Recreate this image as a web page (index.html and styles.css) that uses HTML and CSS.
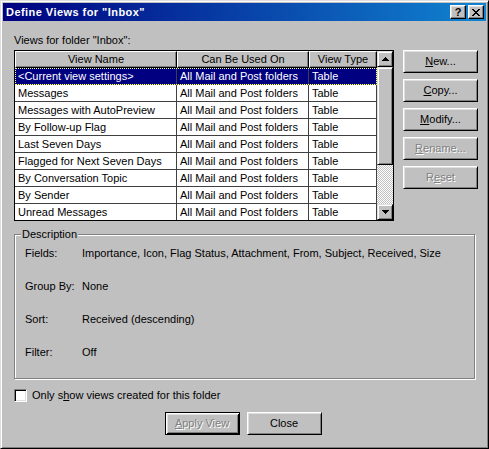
FILE: index.html
```html
<!DOCTYPE html>
<html>
<head>
<meta charset="utf-8">
<link rel="stylesheet" href="styles.css">
</head>
<body>
<div class="window">
  <div class="titlebar">
    <span class="title">Define Views for "Inbox"</span>
    <div class="tbtns">
      <span class="tbtn help">?</span>
      <span class="tbtn"><svg width="8" height="7" viewBox="0 0 8 7" shape-rendering="crispEdges"><path fill="#000" d="M0 0h2v1H0zM6 0h2v1H6zM1 1h2v1H1zM5 1h2v1H5zM2 2h4v1H2zM3 3h2v1H3zM2 4h4v1H2zM1 5h2v1H1zM5 5h2v1H5zM0 6h2v1H0zM6 6h2v1H6z"/></svg></span>
    </div>
  </div>
  <div class="content">
    <div class="top">
      <div class="left">
        <div class="lbl">Views for folder "Inbox":</div>
        <div class="list">
          <div class="list-main">
            <div class="hdr">
              <div class="hc c1">View Name</div>
              <div class="hc c2">Can Be Used On</div>
              <div class="hc c3">View Type</div>
            </div>
            <div class="row sel"><div class="cell c1">&lt;Current view settings&gt;</div><div class="cell c2">All Mail and Post folders</div><div class="cell c3">Table</div></div>
            <div class="row"><div class="cell c1">Messages</div><div class="cell c2">All Mail and Post folders</div><div class="cell c3">Table</div></div>
            <div class="row"><div class="cell c1">Messages with AutoPreview</div><div class="cell c2">All Mail and Post folders</div><div class="cell c3">Table</div></div>
            <div class="row"><div class="cell c1">By Follow-up Flag</div><div class="cell c2">All Mail and Post folders</div><div class="cell c3">Table</div></div>
            <div class="row"><div class="cell c1">Last Seven Days</div><div class="cell c2">All Mail and Post folders</div><div class="cell c3">Table</div></div>
            <div class="row"><div class="cell c1">Flagged for Next Seven Days</div><div class="cell c2">All Mail and Post folders</div><div class="cell c3">Table</div></div>
            <div class="row"><div class="cell c1">By Conversation Topic</div><div class="cell c2">All Mail and Post folders</div><div class="cell c3">Table</div></div>
            <div class="row"><div class="cell c1">By Sender</div><div class="cell c2">All Mail and Post folders</div><div class="cell c3">Table</div></div>
            <div class="row"><div class="cell c1">Unread Messages</div><div class="cell c2">All Mail and Post folders</div><div class="cell c3">Table</div></div>
          </div>
          <div class="vscroll">
            <div class="sb-btn"><svg width="7" height="4" viewBox="0 0 7 4" shape-rendering="crispEdges"><path fill="#000" d="M3 0h1v1H3zM2 1h3v1H2zM1 2h5v1H1zM0 3h7v1H0z"/></svg></div>
            <div class="sb-btn thumb"></div>
            <div class="track"></div>
            <div class="sb-btn"><svg width="7" height="4" viewBox="0 0 7 4" shape-rendering="crispEdges"><path fill="#000" d="M0 0h7v1H0zM1 1h5v1H1zM2 2h3v1H2zM3 3h1v1H3z"/></svg></div>
          </div>
        </div>
      </div>
      <div class="side">
        <div class="btn"><u>N</u>ew...</div>
        <div class="btn"><u>C</u>opy...</div>
        <div class="btn"><u>M</u>odify...</div>
        <div class="btn disabled"><u>R</u>ename...</div>
        <div class="btn disabled">R<u>e</u>set</div>
      </div>
    </div>
    <fieldset class="desc">
      <legend>Description</legend>
      <div class="desc-grid">
        <div>Fields:</div><div>Importance, Icon, Flag Status, Attachment, From, Subject, Received, Size</div>
        <div>Group By:</div><div>None</div>
        <div>Sort:</div><div>Received (descending)</div>
        <div>Filter:</div><div>Off</div>
      </div>
    </fieldset>
    <div class="chk"><span class="box"></span><span>Only s<u>h</u>ow views created for this folder</span></div>
    <div class="bottom">
      <div class="btn default disabled"><u>A</u>pply View</div>
      <div class="btn">Close</div>
    </div>
  </div>
</div>
</body>
</html>
```

FILE: styles.css
```css
html, body {
  margin: 0;
  background: #c0c0c0;
}
body {
  font-family: "Liberation Sans", Arial, sans-serif;
  font-size: 11px;
  line-height: 13px;
  color: #000;
}
.window {
  width: 489px;
  height: 449px;
  box-sizing: border-box;
  border: 1px solid;
  border-color: #dfdfdf #000 #000 #dfdfdf;
  box-shadow: inset 1px 1px #fff, inset -1px -1px #808080;
  padding: 2px;
  display: flex;
  flex-direction: column;
}
.titlebar {
  height: 18px;
  flex: none;
  background: linear-gradient(to right, #000080, #1084d0);
  display: flex;
  align-items: center;
  justify-content: space-between;
  padding: 0 2px 0 3px;
  color: #fff;
  font-weight: bold;
}
.title {
  letter-spacing: 0.45px;
}
.tbtns {
  display: flex;
  gap: 2px;
}
.tbtn {
  width: 16px;
  height: 14px;
  box-sizing: border-box;
  background: #c0c0c0;
  border: 1px solid;
  border-color: #fff #000 #000 #fff;
  box-shadow: inset -1px -1px #808080, inset 1px 1px #dfdfdf;
  display: flex;
  align-items: center;
  justify-content: center;
  color: #000;
}
.help {
  font-size: 11px;
  line-height: 12px;
}
.content {
  flex: 1;
  display: flex;
  flex-direction: column;
  padding: 13px 10px 0 11px;
}
.top {
  display: flex;
  gap: 9px;
}
.left {
  width: 380px;
  display: flex;
  flex-direction: column;
}
.lbl {
  margin-bottom: 3px;
}
.list {
  display: flex;
  height: 171px;
  box-sizing: border-box;
  border: 1px solid #000;
  background: #fff;
}
.list-main {
  width: 362px;
  display: flex;
  flex-direction: column;
  overflow: hidden;
}
.hdr {
  display: flex;
  height: 17px;
  flex: none;
  background: #c0c0c0;
}
.hc {
  box-sizing: border-box;
  height: 17px;
  border: 1px solid;
  border-color: #fff #000 #000 #fff;
  box-shadow: inset -1px -1px #808080;
  text-align: center;
  line-height: 15px;
  white-space: nowrap;
  overflow: hidden;
}
.c1 { width: 162px; flex: none; }
.c2 { width: 132px; flex: none; }
.c3 { width: 68px; flex: none; }
.row {
  display: flex;
  height: 17px;
  flex: none;
  box-sizing: border-box;
  border-bottom: 1px solid #404040;
}
.row:last-child {
  border-bottom: none;
  height: 16px;
}
.cell {
  box-sizing: border-box;
  border-right: 1px solid #404040;
  padding-left: 3px;
  line-height: 16px;
  white-space: nowrap;
  overflow: hidden;
}
.row.sel {
  background: #000080;
  color: #fff;
  outline: 1px dotted #ffff80;
  outline-offset: -1px;
}
.vscroll {
  width: 16px;
  flex: none;
  display: flex;
  flex-direction: column;
  background: repeating-conic-gradient(#fff 0 25%, #c0c0c0 0 50%) 0 0 / 2px 2px;
}
.sb-btn {
  height: 16px;
  flex: none;
  box-sizing: border-box;
  background: #c0c0c0;
  border: 1px solid;
  border-color: #dfdfdf #000 #000 #dfdfdf;
  box-shadow: inset 1px 1px #fff, inset -1px -1px #808080;
  display: flex;
  align-items: center;
  justify-content: center;
}
.sb-btn svg { display: block; }
.thumb {
  height: 98px;
}
.track {
  flex: 1;
}
.side {
  display: flex;
  flex-direction: column;
  gap: 6px;
  margin-top: 16px;
}
.btn {
  width: 75px;
  height: 23px;
  box-sizing: border-box;
  border: 1px solid;
  border-color: #fff #000 #000 #fff;
  box-shadow: inset 1px 1px #dfdfdf, inset -1px -1px #808080;
  display: flex;
  align-items: center;
  justify-content: center;
  background: #c0c0c0;
}
.btn.disabled {
  color: #808080;
  text-shadow: 1px 1px 0 #fff;
}
.btn.default {
  border-color: #000;
  box-shadow: inset 1px 1px #fff, inset -1px -1px #000, inset 2px 2px #dfdfdf, inset -2px -2px #808080;
}
.desc {
  margin: 7px 0 0 0;
  padding: 0;
  width: 461px;
  box-sizing: border-box;
  min-inline-size: 0;
  border: 1px solid #808080;
  box-shadow: inset 1px 1px #fff, 1px 1px #fff;
}
.desc legend {
  padding: 0 1px;
  margin-left: 6px;
  line-height: 13px;
  background: #c0c0c0;
}
.desc-grid {
  display: grid;
  grid-template-columns: 57px 1fr;
  row-gap: 20px;
  padding: 6px 0 19px 10px;
}
.chk {
  display: flex;
  align-items: center;
  gap: 5px;
  margin-top: 10px;
  height: 13px;
}
.box {
  width: 13px;
  height: 13px;
  box-sizing: border-box;
  background: #fff;
  border: 1px solid;
  border-color: #808080 #fff #fff #808080;
  box-shadow: inset 1px 1px #000, inset -1px -1px #dfdfdf;
}
.bottom {
  display: flex;
  justify-content: center;
  gap: 7px;
  margin-top: 10px;
  padding-right: 4px;
}
```
